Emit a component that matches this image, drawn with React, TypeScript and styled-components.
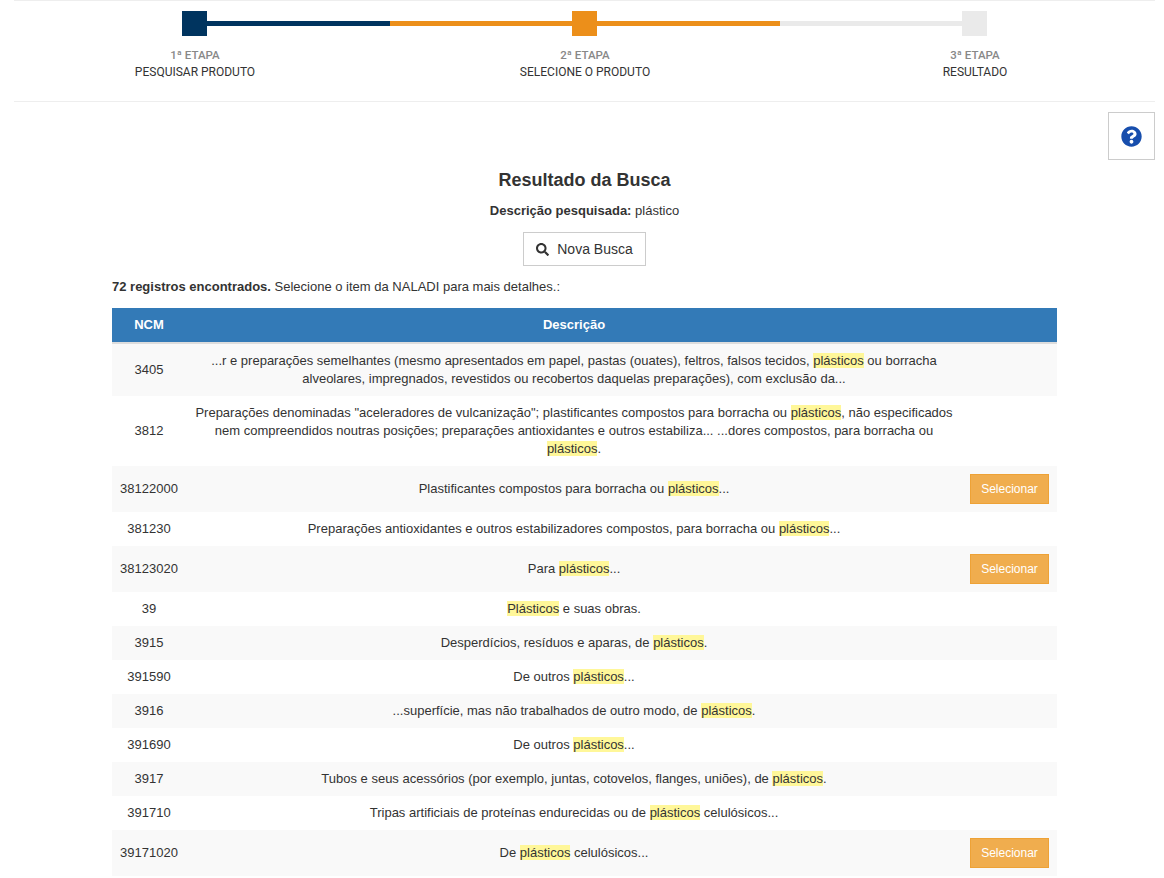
import React from 'react';
import styled, { createGlobalStyle } from 'styled-components';
import { FaQuestionCircle, FaSearch } from 'react-icons/fa';

const GlobalStyle = createGlobalStyle`
  html, body {
    margin: 0;
    padding: 0;
    background: #fff;
    overflow: hidden;
    height: 878px;
  }
  body {
    font-family: 'Liberation Sans', Arial, sans-serif;
    font-size: 13px;
    line-height: 20px;
    color: #333;
  }
`;

const StepperWrap = styled.div`
  margin-left: 14px;
  width: 1141px;
  height: 100px;
  border-top: 1px solid #eee;
  border-bottom: 1px solid #eee;
  overflow: hidden;
`;

const StepRow = styled.div`
  display: grid;
  grid-template-columns: repeat(3, 390px);
  margin-left: -14px;
  padding-top: 10px;
`;

const Step = styled.div`
  display: flex;
  flex-direction: column;
  align-items: center;
`;

const Track = styled.div`
  display: grid;
  grid-template-columns: 182px 25px 183px;
  align-items: center;
  width: 100%;
  height: 25px;
`;

const TrackLine = styled.div<{ $color: string }>`
  height: 5px;
  background: ${(props: { $color: string }) => props.$color};
`;

const StepSquare = styled.div<{ $color: string }>`
  height: 25px;
  background: ${(props: { $color: string }) => props.$color};
`;

const StepNumber = styled.div`
  margin-top: 12px;
  font-family: Roboto, sans-serif;
  font-size: 11.5px;
  font-weight: 500;
  line-height: 14px;
  color: #888;
`;

const StepName = styled.div`
  margin-top: 3px;
  font-family: Roboto, sans-serif;
  font-size: 12px;
  line-height: 14px;
  color: #333;
`;

const HelpButton = styled.button`
  position: absolute;
  top: 112px;
  left: 1108px;
  width: 47px;
  height: 48px;
  padding: 0;
  display: flex;
  align-items: center;
  justify-content: center;
  background: #fff;
  border: 1px solid #ccc;
  color: #174ead;
  font-size: 21px;
`;

const Content = styled.div`
  width: 945px;
  margin-left: 112px;
`;

const Title = styled.h3`
  margin: 68px 0 0;
  text-align: center;
  font-size: 18px;
  font-weight: 700;
  line-height: 20px;
  color: #333;
`;

const SearchedTerm = styled.p`
  margin: 11px 0 0;
  text-align: center;
  font-size: 13px;
  line-height: 20px;
`;

const NewSearchRow = styled.div`
  display: flex;
  justify-content: center;
  margin-top: 11px;
`;

const NewSearchButton = styled.button`
  display: flex;
  align-items: center;
  gap: 8px;
  height: 34px;
  width: 123px;
  box-sizing: border-box;
  justify-content: center;
  padding: 0;
  background: #fff;
  border: 1px solid #ccc;
  font-family: 'Liberation Sans', Arial, sans-serif;
  font-size: 14px;
  color: #333;
  svg {
    font-size: 13px;
  }
`;

const Count = styled.p`
  margin: 11px 0 0;
  font-size: 13px;
  line-height: 20px;
`;

const Table = styled.table`
  width: 945px;
  margin-top: 11px;
  border-collapse: collapse;
  table-layout: fixed;
  font-size: 13px;
  line-height: 18px;
`;

const HeadCell = styled.th`
  padding: 8px;
  height: 18px;
  background: #337ab7;
  border-bottom: 2px solid #ddd;
  color: #fff;
  font-size: 13px;
  font-weight: 700;
  text-align: center;
`;

const Row = styled.tr`
  &:nth-child(odd) td {
    background: #f9f9f9;
  }
`;

const Cell = styled.td`
  padding: 8px;
  text-align: center;
  vertical-align: middle;
`;

const Mark = styled.mark`
  background: #fff799;
  color: inherit;
`;

const SelectButton = styled.button`
  display: block;
  box-sizing: border-box;
  width: 79px;
  height: 30px;
  padding: 0;
  background: #f0ad4e;
  border: 1px solid #eea236;
  color: #fff;
  font-family: 'Liberation Sans', Arial, sans-serif;
  font-size: 12px;
`;

const steps = [
  { number: '1ª ETAPA', name: 'PESQUISAR PRODUTO', left: 'transparent', square: '#00345f', right: '#00345f' },
  { number: '2ª ETAPA', name: 'SELECIONE O PRODUTO', left: '#ec8f1a', square: '#ec8f1a', right: '#ec8f1a' },
  { number: '3ª ETAPA', name: 'RESULTADO', left: '#eaeaea', square: '#eaeaea', right: 'transparent' },
];

const rows: { ncm: string; text: string; select?: boolean }[] = [
  { ncm: '3405', text: '...r e preparações semelhantes (mesmo apresentados em papel, pastas (ouates), feltros, falsos tecidos, *plásticos* ou borracha alveolares, impregnados, revestidos ou recobertos daquelas preparações), com exclusão da...' },
  { ncm: '3812', text: 'Preparações denominadas "aceleradores de vulcanização"; plastificantes compostos para borracha ou *plásticos*, não especificados nem compreendidos noutras posições; preparações antioxidantes e outros estabiliza... ...dores compostos, para borracha ou *plásticos*.' },
  { ncm: '38122000', text: 'Plastificantes compostos para borracha ou *plásticos*...', select: true },
  { ncm: '381230', text: 'Preparações antioxidantes e outros estabilizadores compostos, para borracha ou *plásticos*...' },
  { ncm: '38123020', text: 'Para *plásticos*...', select: true },
  { ncm: '39', text: '*Plásticos* e suas obras.' },
  { ncm: '3915', text: 'Desperdícios, resíduos e aparas, de *plásticos*.' },
  { ncm: '391590', text: 'De outros *plásticos*...' },
  { ncm: '3916', text: '...superfície, mas não trabalhados de outro modo, de *plásticos*.' },
  { ncm: '391690', text: 'De outros *plásticos*...' },
  { ncm: '3917', text: 'Tubos e seus acessórios (por exemplo, juntas, cotovelos, flanges, uniões), de *plásticos*.' },
  { ncm: '391710', text: 'Tripas artificiais de proteínas endurecidas ou de *plásticos* celulósicos...' },
  { ncm: '39171020', text: 'De *plásticos* celulósicos...', select: true },
];

// trechos entre asteriscos ficam destacados
const highlight = (text: string) =>
  text.split('*').map((part, i) => (i % 2 ? <Mark key={i}>{part}</Mark> : part));

const App: React.FC = () => {
  return (
    <>
      <GlobalStyle />
      <StepperWrap>
        <StepRow>
          {steps.map((step) => (
            <Step key={step.number}>
              <Track>
                <TrackLine $color={step.left} />
                <StepSquare $color={step.square} />
                <TrackLine $color={step.right} />
              </Track>
              <StepNumber>{step.number}</StepNumber>
              <StepName>{step.name}</StepName>
            </Step>
          ))}
        </StepRow>
      </StepperWrap>

      <HelpButton aria-label="Ajuda">
        <FaQuestionCircle />
      </HelpButton>

      <Content>
        <Title>Resultado da Busca</Title>
        <SearchedTerm>
          <strong>Descrição pesquisada:</strong> plástico
        </SearchedTerm>
        <NewSearchRow>
          <NewSearchButton>
            <FaSearch />
            Nova Busca
          </NewSearchButton>
        </NewSearchRow>
        <Count>
          <strong>72 registros encontrados.</strong> Selecione o item da NALADI para mais detalhes.:
        </Count>
        <Table>
          <colgroup>
            <col style={{ width: 74 }} />
            <col />
            <col style={{ width: 95 }} />
          </colgroup>
          <thead>
            <tr>
              <HeadCell>NCM</HeadCell>
              <HeadCell>Descrição</HeadCell>
              <HeadCell />
            </tr>
          </thead>
          <tbody>
            {rows.map((row) => (
              <Row key={row.ncm}>
                <Cell>{row.ncm}</Cell>
                <Cell>{highlight(row.text)}</Cell>
                <Cell>{row.select && <SelectButton>Selecionar</SelectButton>}</Cell>
              </Row>
            ))}
          </tbody>
        </Table>
      </Content>
    </>
  );
};

export default App;
